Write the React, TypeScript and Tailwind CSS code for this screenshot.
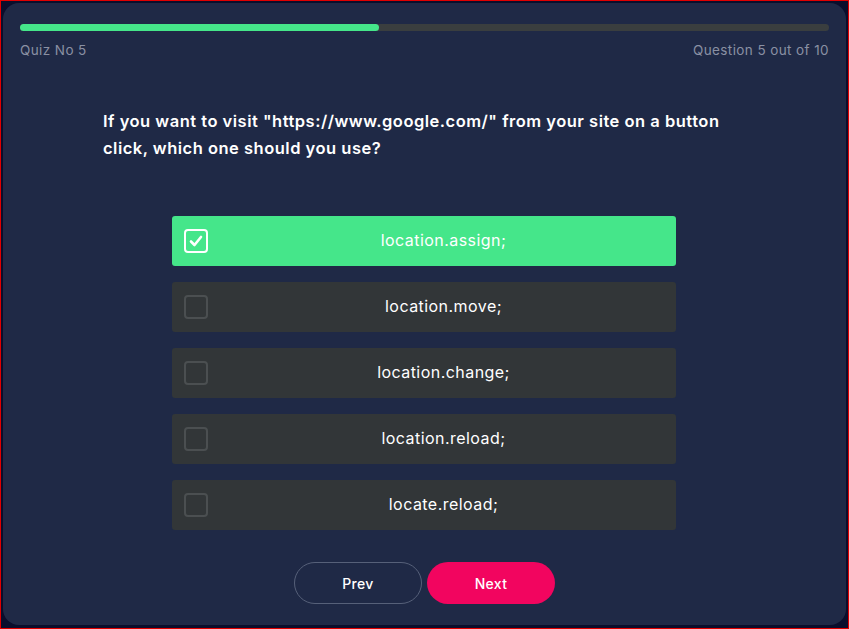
import React from "react";

const options = [
  "location.assign;",
  "location.move;",
  "location.change;",
  "location.reload;",
  "locate.reload;",
];

export default function App() {
  return (
    <div
      className="w-[849px] h-[629px] border border-[#e00000] bg-[#0b0e2c] pl-[2px] pt-[2px] pr-[2px] pb-[3px]"
      style={{ fontFamily: "Inter, 'Open Sans', sans-serif" }}
    >
      <div className="h-full w-full rounded-[16px] bg-[#1f2946] flex flex-col px-[17px] pt-[21px]">
        <div className="h-[7px] w-full rounded-full bg-[#3a3e3f]">
          <div className="h-full w-[359px] rounded-full bg-[#45e68a]" />
        </div>
        <div className="mt-[11px] flex justify-between text-[13.5px] tracking-[0.4px] text-[#8a90a3] leading-[16px]">
          <span>Quiz No 5</span>
          <span>Question 5 out of 10</span>
        </div>
        <div className="mt-[50px] pl-[83px] pr-[70px] text-[16.5px] font-semibold tracking-[0.5px] leading-[27px] text-white">
          If you want to visit "https://www.google.com/" from your site on a button click, which one should you use?
        </div>
        <div className="mt-[54px] flex flex-col items-center gap-[16px] pr-[2px]">
          {options.map((o, i) => {
            const active = i === 0;
            return (
              <div
                key={o}
                className={`relative flex h-[50px] w-[504px] items-center justify-center rounded-[3px] pl-[40px] pb-[3px] ${
                  active ? "bg-[#45e68a]" : "bg-[#323638]"
                }`}
              >
                <div
                  className={`absolute left-[12px] top-[13px] flex h-[24px] w-[24px] items-center justify-center rounded-[4px] border-2 ${
                    active ? "border-white" : "border-[#4b4f51]"
                  }`}
                >
                  {active && (
                    <svg width="14" height="14" viewBox="0 0 14 14" fill="none">
                      <path d="M2 7.5 L5.5 11 L12 3" stroke="white" strokeWidth="2.6" strokeLinecap="round" strokeLinejoin="round" />
                    </svg>
                  )}
                </div>
                <span className="text-[16px] tracking-[0.45px] text-white">{o}</span>
              </div>
            );
          })}
        </div>
        <div className="mt-[32px] flex justify-center gap-[5px]">
          <button className="h-[42px] w-[128px] rounded-full border border-[#566079] text-[14px] font-medium tracking-[0.3px] text-white">
            Prev
          </button>
          <button className="h-[42px] w-[128px] rounded-full bg-[#f2055f] text-[14px] font-medium tracking-[0.3px] text-white">
            Next
          </button>
        </div>
      </div>
    </div>
  );
}
